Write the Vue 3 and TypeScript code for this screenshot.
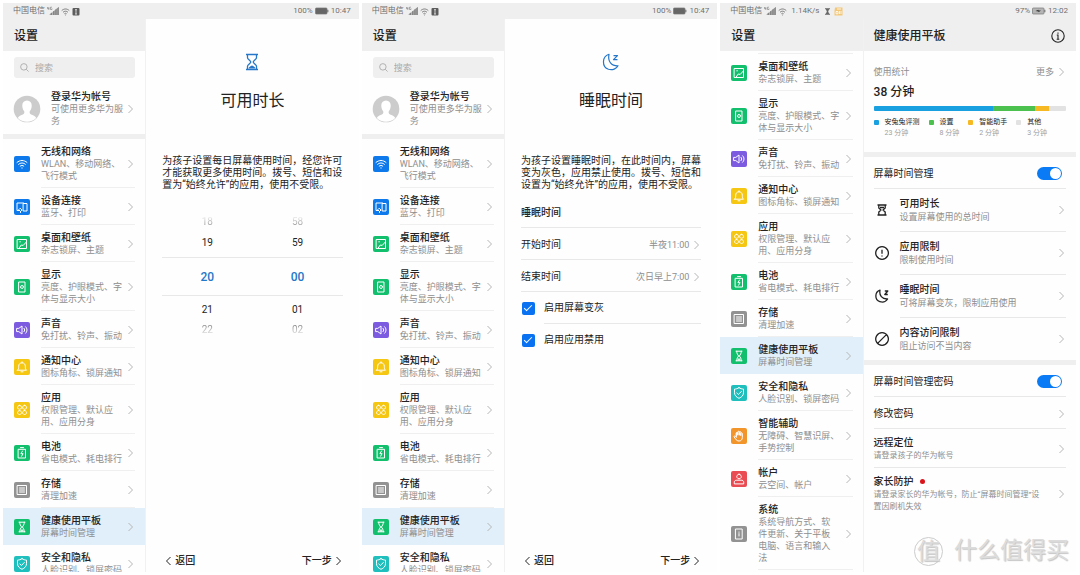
<script setup lang="ts">
import { ref } from 'vue'

interface MenuItem {
  title: string
  sub: string
  icon: string
  color: string
}

const icons: Record<string, string> = {
  wifi: 'M3 6.4c3-2.6 7-2.6 10 0M4.6 8.3c2-1.8 4.8-1.8 6.8 0M6.2 10.1c1.1-.9 2.5-.9 3.6 0M8 11.8v.4',
  devices: 'M5 11.500H3V4h6.500M9.500 4.500h3.500v7.500H9.500zM6.500 9.500l1.500 1.500-1.500 1.500L5 11zM6.500 12.500v1',
  wallpaper: 'M3.500 3.500h9v9h-9zM5.200 12l2-3 2 .400 3-3.200M5.800 5.800h.600',
  display: 'M5 3h6v10H5zM6.500 8.500a1.600 1.600 0 0 1 2.600-1.700M9.500 7.400a1.600 1.600 0 0 1-2.600 1.700M8 7.800v.300',
  sound: 'M3 6.400h1.800L8 4v8L4.800 9.600H3zM10 6.300c.900.900.900 2.500 0 3.400M11.600 4.700c1.900 1.700 1.900 4.900 0 6.600',
  bell: 'M3.500 11.200h9c-1-.800-1.200-1.700-1.200-4 0-2-1.300-3.400-3.300-3.400S4.700 5.200 4.700 7.200c0 2.300-.200 3.200-1.200 4zM8 2.800v1M7 12.800h2',
  apps: 'M5.500 3.300a2 2 0 1 0 .1 0zM10.500 3.300a2 2 0 1 0 .1 0zM5.500 8.500a2 2 0 1 0 .1 0zM10.500 8.500a2 2 0 1 0 .1 0z',
  battery: 'M4.500 4.300h7v8.700h-7zM6.500 2.600h3M8.500 6L6.900 8.700h2.200L7.600 11.200',
  storage: 'M3.500 3.500h9v9h-9zM5.500 6h5M5.500 8h5M5.500 10h5',
  hourglass: 'M5 3.200h6M5 12.800h6M5.700 3.200c0 2.700 1 3.300 1.900 4.800-.900 1.500-1.900 2.100-1.900 4.800M10.300 3.200c0 2.700-1 3.300-1.900 4.800.900 1.500 1.900 2.100 1.900 4.800M7 11.700L8 10.500l1 1.200z',
  shield: 'M8 2.700c1.500 1 3 1.300 4.500 1.400v3.600c0 2.800-2 4.500-4.500 5.600-2.500-1.100-4.500-2.800-4.500-5.600V4.100C5 4 6.500 3.700 8 2.700zM5.800 7.900l1.600 1.600 2.900-3',
  hand: 'M5.300 9V5.200M5.300 7.500V5c0-1 1.500-1 1.500 0v2M6.800 6.500V4c0-1 1.500-1 1.500 0v3M8.300 6.500V4.300c0-1 1.500-1 1.500 0V7.500M9.800 7V5.500c0-1 1.500-1 1.500 0v4c0 2-1.200 3.500-3.200 3.500-1.800 0-2.600-.700-3.500-2L3.200 9c-.500-.900.600-1.500 1.200-.800l1 1',
  account: 'M8 3.200a2.300 2.300 0 1 0 .1 0zM3.300 12.500v-1.300c0-1.500 1.200-2 2.500-2h4.400c1.300 0 2.500.500 2.500 2v1.300z',
  system: 'M4.800 3h6.400v10H4.800zM8 6v.300M8 7.600v2.400',
}

const green = '#11bf6d'
const base: MenuItem[] = [
  { title: '桌面和壁纸', sub: '杂志锁屏、主题', icon: 'wallpaper', color: green },
  { title: '显示', sub: '亮度、护眼模式、字\n体与显示大小', icon: 'display', color: green },
  { title: '声音', sub: '免打扰、铃声、振动', icon: 'sound', color: '#7d5be0' },
  { title: '通知中心', sub: '图标角标、锁屏通知', icon: 'bell', color: '#f5c713' },
  { title: '应用', sub: '权限管理、默认应\n用、应用分身', icon: 'apps', color: '#f5c713' },
  { title: '电池', sub: '省电模式、耗电排行', icon: 'battery', color: green },
  { title: '存储', sub: '清理加速', icon: 'storage', color: '#929292' },
  { title: '健康使用平板', sub: '屏幕时间管理', icon: 'hourglass', color: green },
  { title: '安全和隐私', sub: '人脸识别、锁屏密码', icon: 'shield', color: '#1fbfbd' },
]
const upper: MenuItem[] = [
  { title: '无线和网络', sub: 'WLAN、移动网络、\n飞行模式', icon: 'wifi', color: '#0d79ea' },
  { title: '设备连接', sub: '蓝牙、打印', icon: 'devices', color: '#0d79ea' },
]
const lower: MenuItem[] = [
  { title: '智能辅助', sub: '无障碍、智慧识屏、\n手势控制', icon: 'hand', color: '#f2952b' },
  { title: '帐户', sub: '云空间、帐户', icon: 'account', color: '#e94c53' },
  { title: '系统', sub: '系统导航方式、软\n件更新、关于平板\n电脑、语言和输入\n法', icon: 'system', color: '#929292' },
]

const screens = [
  { id: 'duration', menu: [...upper, ...base], battery: '100%', time: '10:47' },
  { id: 'sleep', menu: [...upper, ...base], battery: '100%', time: '10:47' },
  { id: 'balance', menu: [...base, ...lower], battery: '97%', time: '12:02' },
]

const hours = ['18', '19', '20', '21', '22']
const minutes = ['58', '59', '00', '01', '02']

const grayOut = ref(true)
const disableApps = ref(true)
const manage = ref(true)
const password = ref(true)

const usage = [
  { name: '安兔兔评测', time: '23 分钟', share: 62, color: '#19a0e0' },
  { name: '设置', time: '8 分钟', share: 22, color: '#4cc150' },
  { name: '智能助手', time: '2 分钟', share: 7, color: '#f6b823' },
  { name: '其他', time: '3 分钟', share: 9, color: '#e2e2e2' },
]

const limits = [
  { title: '可用时长', sub: '设置屏幕使用的总时间', d: 'M3.500 3h9M3.500 13h9M4.800 3v3L7 8l-2.200 2v3M11.200 3v3L9 8l2.200 2v3M6 5.500h4' },
  { title: '应用限制', sub: '限制使用时间', d: 'M8 1.700a6.300 6.300 0 1 0 .1 0zM8 4.800v4M8 10.600v.900' },
  { title: '睡眠时间', sub: '可将屏幕变灰，限制应用使用', d: 'M6 2.200C.500 4 .500 12 5.800 13.700c3.200 1 6.200-.200 7.800-2.700C8 11.300 5 7.500 6 2.200zM10.800 3h3l-3 3.500h3' },
  { title: '内容访问限制', sub: '阻止访问不当内容', d: 'M8 1.700a6.300 6.300 0 1 0 .1 0zM12.400 3.600l-8.800 8.800' },
]
</script>

<template>
  <main class="page">
    <section v-for="s in screens" :key="s.id" class="tablet">
      <div class="status">
        <span>中国电信</span>
        <svg class="signal" viewBox="0 0 12 10" width="12" height="10">
          <path d="M.5 1v1.700h1.800M1.800 1v2.800M5 1.200H3.500v2.300H5V2.400" fill="none" stroke="#777" stroke-width=".6" />
          <path d="M2 9L11.800 1V9z" fill="#b5b5b5" />
          <path d="M3.500 9V7.600L5 6.500V9zM6 9V5.600l1.500-1.200V9zM8.200 9V3.800l1.500-1.200V9zM10.300 9V2.200L11.800 1V9z" fill="#858585" />
        </svg>
        <svg viewBox="0 0 10 10" width="9" height="9" fill="none" stroke="#777" stroke-width="1.100">
          <path d="M.8 4c2.600-2.400 5.800-2.400 8.400 0M2.300 5.800c1.700-1.500 3.700-1.500 5.400 0M3.800 7.500c.800-.700 1.600-.700 2.400 0M5 8.500v.8" />
        </svg>
        <template v-if="s.id === 'balance'">
          <span class="speed">1.14K/s</span>
          <svg class="sand" viewBox="0 0 6 8" width="5" height="7" fill="#666">
            <path d="M0 0h6v1.200H5L3.800 4 5 6.800h1V8H0V6.800h1L2.200 4 1 1.200H0z" />
          </svg>
          <svg viewBox="0 0 9 9" width="9" height="9">
            <path d="M1 .5h7.500V8.500H.5V4z" fill="#f3c779" />
            <path d="M2 6.800V4.500h2v2.300zM5.500 4v3M7 4v3M3 2h4" fill="none" stroke="#fff" stroke-width=".8" />
          </svg>
        </template>
        <svg v-else viewBox="0 0 8 9" width="8" height="9">
          <rect x=".5" y="1" width="7" height="7.500" rx="1" fill="#5c5c5c" />
          <path d="M4 2.500v4.700M3 2.700h2M3 7h2" stroke="#ddd" stroke-width=".9" />
        </svg>
        <span class="push">{{ s.battery }}</span>
        <svg viewBox="0 0 14 8" width="14" height="8">
          <rect x=".5" y="1" width="11.500" height="6" rx=".8" :fill="s.id === 'balance' ? '#b5b5b5' : '#666'" stroke="#777" stroke-width=".7" />
          <path d="M12.800 2.700v2.600" stroke="#777" stroke-width="1.200" />
          <path v-if="s.id === 'balance'" d="M3.500 4l3-1.200v.700h2.500L6.500 5.200V4.500z" fill="#333" />
        </svg>
        <span>{{ s.time }}</span>
      </div>

      <aside class="side">
        <h1 class="head">设置</h1>
        <template v-if="s.id !== 'balance'">
          <label class="search">
            <svg viewBox="0 0 10 10" width="9" height="9" fill="none" stroke="#aaa">
              <circle cx="4.300" cy="4.300" r="3.600" />
              <path d="M7 7l2.500 2.500" />
            </svg>
            <input type="search" placeholder="搜索" aria-label="搜索" />
          </label>
          <a href="#" class="account">
            <svg viewBox="0 0 28 28" width="28" height="28">
              <circle cx="14" cy="14" r="13.300" fill="#ccc" />
              <path d="M14 5.500c3.300 0 5 2.500 4.700 5.700-.200 2.500-1.200 4.200-2 5.200-.300 1.800.300 2.600 2 3.300 2 .700 3.500 1.300 4.500 3.300A13 13 0 0 1 4.800 23c1-2 2.500-2.600 4.500-3.300 1.700-.700 2.300-1.500 2-3.300-.800-1-1.800-2.700-2-5.200C9 8 10.700 5.500 14 5.500z" fill="#fff" />
            </svg>
            <span class="words">
              <strong>登录华为帐号</strong>
              <small>可使用更多华为服{{ '\n' }}务</small>
            </span>
            <svg class="chev" viewBox="0 0 5 10"><path d="M.5 1l4 4-4 4" /></svg>
          </a>
          <div class="band"></div>
        </template>
        <nav :class="['menu', { scrolled: s.id === 'balance' }]">
          <a v-for="m in s.menu" :key="m.title" href="#" :class="['item', { active: m.icon === 'hourglass' }]">
            <svg class="tile" viewBox="0 0 16 16" width="16" height="16">
              <rect width="16" height="16" rx="2" :fill="m.color" />
              <path :d="icons[m.icon]" fill="none" stroke="#fff" stroke-width="1" stroke-linecap="round" stroke-linejoin="round" />
            </svg>
            <span class="body">
              <span class="words">
                <strong>{{ m.title }}</strong>
                <small>{{ m.sub }}</small>
              </span>
              <svg class="chev" viewBox="0 0 5 10"><path d="M.5 1l4 4-4 4" /></svg>
            </span>
          </a>
        </nav>
      </aside>

      <section v-if="s.id !== 'balance'" class="detail wizard">
        <svg v-if="s.id === 'duration'" class="hero" viewBox="0 0 16 18" width="16" height="18">
          <path d="M2 1.500h12M2 16.500h12M3.500 1.500v3.200c0 1.500 3.300 3 3.300 4.300s-3.300 2.800-3.300 4.300v3.200M12.500 1.500v3.200c0 1.500-3.300 3-3.300 4.300s3.300 2.800 3.300 4.300v3.200" fill="none" stroke="#2477c9" stroke-width="1.300" />
          <path d="M4.500 15.500c.300-1.500 2-2.500 3.500-3 1.500.500 3.200 1.500 3.500 3z" fill="#2477c9" />
        </svg>
        <svg v-else class="hero" viewBox="0 0 18 18" width="18" height="18" fill="none" stroke="#2477c9" stroke-width="1.200" stroke-linejoin="round">
          <path d="M7 1.300C-.3 3.500-.3 14 6.500 16.300c4 1.200 8-.500 9.500-3.500C9.500 13 5.500 8.500 7 1.300z" />
          <path d="M11.500 2.700h4l-4 4h4" />
        </svg>
        <h2>{{ s.id === 'duration' ? '可用时长' : '睡眠时间' }}</h2>
        <template v-if="s.id === 'duration'">
          <p>为孩子设置每日屏幕使用时间，经您许可才能获取更多使用时间。拨号、短信和设置为“始终允许”的应用，使用不受限。</p>
          <div class="picker">
            <ul role="listbox" aria-label="小时">
              <li v-for="(h, i) in hours" :key="h" role="option" :aria-selected="i === 2">{{ h }}</li>
            </ul>
            <ul role="listbox" aria-label="分钟">
              <li v-for="(m, i) in minutes" :key="m" role="option" :aria-selected="i === 2">{{ m }}</li>
            </ul>
          </div>
        </template>
        <template v-else>
          <p>为孩子设置睡眠时间，在此时间内，屏幕变为灰色，应用禁止使用。拨号、短信和设置为“始终允许”的应用，使用不受限。</p>
          <div class="options">
            <h3 class="line">睡眠时间</h3>
            <a href="#" class="line">开始时间<span class="value">半夜11:00</span><svg class="chev" viewBox="0 0 5 10"><path d="M.5 1l4 4-4 4" /></svg></a>
            <a href="#" class="line">结束时间<span class="value">次日早上7:00</span><svg class="chev" viewBox="0 0 5 10"><path d="M.5 1l4 4-4 4" /></svg></a>
            <label class="tick"><input v-model="grayOut" type="checkbox" /><span>启用屏幕变灰</span></label>
            <label class="tick"><input v-model="disableApps" type="checkbox" /><span>启用应用禁用</span></label>
          </div>
        </template>
        <footer>
          <button type="button"><svg viewBox="0 0 5 10"><path d="M4.500 1l-4 4 4 4" /></svg>返回</button>
          <button type="button">下一步<svg viewBox="0 0 5 10"><path d="M.5 1l4 4-4 4" /></svg></button>
        </footer>
      </section>

      <section v-else class="detail balance">
        <header class="head">
          <h2>健康使用平板</h2>
          <button type="button" aria-label="信息">
            <svg viewBox="0 0 14 14" width="14" height="14" fill="none" stroke="#222" stroke-width="1.100">
              <circle cx="7" cy="7" r="6.200" />
              <path d="M7 3.500v1.200M5.800 6H7v4M5.700 10.200h2.600" />
            </svg>
          </button>
        </header>
        <div class="stats">
          <div class="stats-top">使用统计<a href="#">更多<svg class="chev" viewBox="0 0 5 10"><path d="M.5 1l4 4-4 4" /></svg></a></div>
          <strong class="total">38 分钟</strong>
          <div class="bar">
            <span v-for="u in usage" :key="u.name" :style="{ width: u.share + '%', background: u.color }"></span>
          </div>
          <ul class="legend">
            <li v-for="u in usage" :key="u.name">
              <i :style="{ background: u.color }"></i>
              <div>{{ u.name }}<small>{{ u.time }}</small></div>
            </li>
          </ul>
        </div>
        <div class="band"></div>
        <div class="group">
          <label class="line">屏幕时间管理<input v-model="manage" class="switch" type="checkbox" role="switch" /></label>
          <div class="limits">
            <a v-for="l in limits" :key="l.title" href="#" class="limit">
              <svg viewBox="0 0 16 16" width="16" height="16"><path :d="l.d" fill="none" stroke="#222" stroke-width="1.300" stroke-linejoin="round" /></svg>
              <span class="limit-body">
                <span class="words"><strong>{{ l.title }}</strong><small>{{ l.sub }}</small></span>
                <svg class="chev" viewBox="0 0 5 10"><path d="M.5 1l4 4-4 4" /></svg>
              </span>
            </a>
          </div>
        </div>
        <div class="band"></div>
        <div class="group">
          <label class="line">屏幕时间管理密码<input v-model="password" class="switch" type="checkbox" role="switch" /></label>
          <a href="#" class="line">修改密码<svg class="chev" viewBox="0 0 5 10"><path d="M.5 1l4 4-4 4" /></svg></a>
          <a href="#" class="guard lined">
            <span class="words"><strong>远程定位</strong><small>请登录孩子的华为帐号</small></span>
            <svg class="chev" viewBox="0 0 5 10"><path d="M.5 1l4 4-4 4" /></svg>
          </a>
          <a href="#" class="guard">
            <span class="words"><strong>家长防护<i class="dot"></i></strong><small>请登录家长的华为帐号，防止“屏幕时间管理”设{{ '\n' }}置因刷机失效</small></span>
            <svg class="chev" viewBox="0 0 5 10"><path d="M.5 1l4 4-4 4" /></svg>
          </a>
        </div>
      </section>
    </section>
    <div class="mark"><span class="seal">值</span>什么值得买</div>
  </main>
</template>

<style>
body {
  margin: 0;
  background: #fff;
}
</style>

<style scoped>
.page {
  position: relative;
  display: grid;
  grid-template-columns: repeat(3, minmax(0, 1fr));
  gap: 3px;
  box-sizing: border-box;
  height: 100vh;
  padding: 3px 4px 3px 3px;
  overflow: hidden;
  color: #222;
  font-family: Roboto, "Noto Sans CJK SC", sans-serif;
  font-size: 10px;
  line-height: 12px;
}
h1, h2, h3, p, ul {
  margin: 0;
  padding: 0;
  font-weight: 400;
}
ul {
  list-style: none;
}
a {
  color: inherit;
  text-decoration: none;
}
button {
  padding: 0;
  border: 0;
  background: none;
  color: inherit;
  font: inherit;
}
input[type="checkbox"] {
  appearance: none;
  margin: 0;
}
svg {
  flex: none;
}
.tablet {
  display: grid;
  grid-template-columns: 2fr 3fr;
  grid-template-rows: 16px minmax(0, 1fr);
  min-height: 0;
  background: #fefefe;
}
.status {
  grid-column: 1 / -1;
  display: flex;
  align-items: center;
  gap: 2px;
  padding: 0 8px 0 10px;
  background: #efefef;
  color: #707070;
  font-size: 8px;
}
.speed {
  margin-left: 2px;
}
.sand {
  margin: 0 2px 0 4px;
}
.push {
  margin-left: auto;
}
.side {
  min-width: 0;
  overflow: hidden;
}
.head {
  display: flex;
  align-items: center;
  justify-content: space-between;
  box-sizing: border-box;
  height: 32px;
  padding: 2px 11px 0;
  background: #efefef;
  font-size: 12px;
  font-weight: 500;
}
.search {
  display: flex;
  align-items: center;
  gap: 6px;
  height: 21px;
  margin: 6px 10px 5px 11px;
  padding-left: 6px;
  border-radius: 3px;
  background: #efefef;
}
.search input {
  width: 100%;
  min-width: 0;
  padding: 0;
  border: 0;
  outline: 0;
  background: none;
  font: inherit;
  font-size: 9px;
}
.search input::placeholder {
  color: #aaa;
}
.account {
  display: flex;
  align-items: center;
  height: 51px;
  padding: 0 10px;
  gap: 10px;
}
.band {
  height: 5px;
  background: #efefef;
}
.words {
  flex: 1;
  min-width: 0;
  white-space: pre;
}
.words strong {
  display: block;
  line-height: 13px;
  font-weight: 500;
}
.words small {
  display: block;
  color: #8e8e8e;
  font-size: 9px;
  line-height: 12px;
}
.chev {
  width: 5px;
  height: 10px;
  margin-right: 2px;
  fill: none;
  stroke: #b5b5b5;
}
.menu.scrolled::before {
  content: "";
  display: block;
  height: 2px;
  margin: 0 10px 0 38px;
  border-bottom: 1px solid #efefef;
}
.item {
  display: flex;
  align-items: center;
  gap: 11px;
  padding: 0 10px 0 11px;
}
.body {
  flex: 1;
  display: flex;
  align-items: center;
  min-width: 0;
  padding: 6px 0 5px;
  border-bottom: 1px solid #efefef;
}
.active {
  background: #e1effb;
}
.active .body {
  border-color: #e1effb;
}
.detail {
  min-width: 0;
  border-left: 1px solid #f1f1f1;
}
.wizard {
  display: flex;
  flex-direction: column;
  padding: 0 16px;
}
.hero {
  align-self: center;
  margin-top: 34px;
}
.wizard h2 {
  margin-top: 20px;
  font-size: 16px;
  line-height: 20px;
  text-align: center;
}
.wizard p {
  margin-top: 44px;
}
.picker {
  display: grid;
  grid-template-columns: 1fr 1fr;
  margin-top: 21px;
  text-align: center;
}
.picker li {
  height: 20px;
  line-height: 20px;
}
.picker li:first-child,
.picker li:last-child {
  background: linear-gradient(#eee 25%, #888 75%);
  background-clip: text;
  color: transparent;
}
.picker li:last-child {
  background: linear-gradient(#888 25%, #eee 75%);
  background-clip: text;
}
.picker li:nth-child(2) {
  height: 25px;
  line-height: 22px;
}
.picker li:nth-child(3) {
  height: 37px;
  border: solid #e8e8e8;
  border-width: 1px 0;
  color: #2477c9;
  font-size: 12px;
  font-weight: 500;
  line-height: 38px;
}
.picker li:nth-child(4) {
  padding-top: 4px;
}
.options {
  margin-top: 5px;
}
.line {
  display: flex;
  align-items: center;
  box-sizing: border-box;
  height: 32px;
  padding-top: 2px;
  border-bottom: 1px solid #e8e8e8;
  font-size: 10px;
}
h3.line {
  font-weight: 500;
}
.value {
  margin: 0 5px 0 auto;
  color: #8e8e8e;
  font-size: 9px;
}
.tick {
  display: flex;
  align-items: center;
  gap: 9px;
  height: 32px;
}
.tick span {
  flex: 1;
  line-height: 31px;
  border-bottom: 1px solid #e8e8e8;
}
.tick:last-child span {
  border-color: transparent;
}
.tick input[type="checkbox"] {
  display: grid;
  place-items: center;
  width: 13px;
  height: 13px;
  margin-left: 1px;
  border-radius: 2px;
  background: #d0d0d0;
}
.tick input[type="checkbox"]:checked {
  background: #0a72f0;
}
.tick input:checked::before {
  content: "";
  width: 7px;
  height: 3px;
  margin-bottom: 3px;
  border: solid #fff;
  border-width: 0 0 1px 1px;
  transform: rotate(-45deg);
}
footer {
  display: flex;
  justify-content: space-between;
  margin: auto 0 5px;
  padding: 0 2px 0 4px;
}
footer button {
  display: flex;
  align-items: center;
  gap: 4px;
  font-weight: 500;
}
footer svg {
  width: 5px;
  height: 10px;
  fill: none;
  stroke: #222;
}
.balance .head h2 {
  font-size: 12px;
  font-weight: 500;
}
.balance .head {
  padding: 2px 11px 0 10px;
}
.balance .head button {
  display: flex;
}
.stats {
  padding: 15px 10px 13px;
}
.stats-top {
  display: flex;
  align-items: center;
  justify-content: space-between;
  color: #8e8e8e;
  font-size: 9px;
}
.stats-top a {
  display: flex;
  align-items: center;
  gap: 5px;
}
.total {
  display: block;
  margin: 6px 0;
  font-size: 12px;
  font-weight: 500;
  line-height: 16px;
}
.bar {
  display: flex;
  height: 5px;
  border-radius: 1px;
  overflow: hidden;
}
.legend {
  display: flex;
  gap: 9px;
  margin-top: 6px;
  font-size: 7px;
  line-height: 11px;
}
.legend li {
  display: flex;
  gap: 6px;
}
.legend i {
  width: 5px;
  height: 5px;
  margin-top: 3px;
  border-radius: 1px;
}
.legend small {
  display: block;
  color: #a0a0a0;
  font-size: 7px;
}
.group {
  padding: 0 10px;
}
.line .chev {
  margin-left: auto;
}
.line .value + .chev {
  margin-left: 0;
}
.line .switch[type="checkbox"] {
  display: flex;
  width: 25px;
  height: 13px;
  margin: 0 4px 0 auto;
  border-radius: 7px;
  background: #ccc;
}
.switch::before {
  content: "";
  width: 11px;
  height: 11px;
  margin: 1px;
  border-radius: 50%;
  background: #fff;
}
.line .switch[type="checkbox"]:checked {
  background: #0a7bf5;
}
.switch:checked::before {
  margin-left: auto;
}
.limit {
  display: flex;
  align-items: center;
  gap: 10px;
}
.limit-body {
  flex: 1;
  display: flex;
  align-items: center;
  height: 42px;
}
.limit strong,
.guard strong {
  line-height: 14px;
}
.limit + .limit .limit-body {
  border-top: 1px solid #e8e8e8;
}
.guard {
  display: flex;
  align-items: center;
  padding: 7px 0 5px;
}
.guard small {
  font-size: 8px;
}
.lined {
  border-bottom: 1px solid #e8e8e8;
}
.dot {
  display: inline-block;
  width: 5px;
  height: 5px;
  margin: 0 0 1px 6px;
  border-radius: 50%;
  background: #d9141b;
}
.mark {
  position: absolute;
  right: 11px;
  bottom: 9px;
  display: flex;
  align-items: center;
  gap: 11px;
  color: #dcdcdc;
  font-size: 23px;
  line-height: 30px;
  text-shadow: 1px 1px 1px #c4c4c4;
}
.seal {
  width: 27px;
  border: 1px solid #ccc;
  border-radius: 50%;
  line-height: 27px;
  text-align: center;
}
</style>
